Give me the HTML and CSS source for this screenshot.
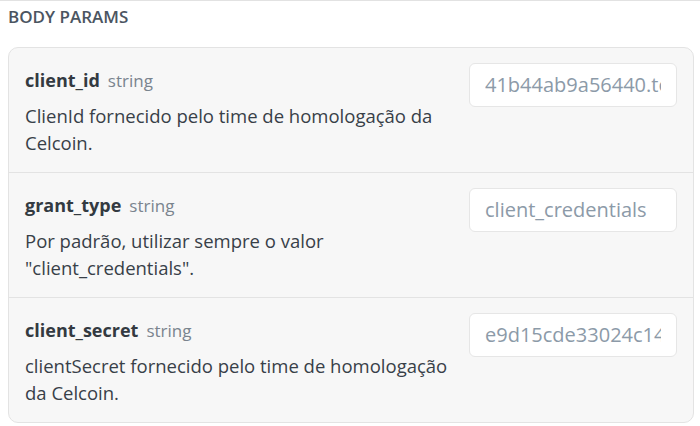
FILE: index.html
```html
<!DOCTYPE html>
<html lang="pt">
<head>
<meta charset="utf-8">
<link rel="stylesheet" href="styles.css">
</head>
<body>
<div class="page">
  <div class="section-title">BODY PARAMS</div>
  <div class="card">
    <div class="row">
      <div class="info">
        <div class="head"><span class="name">client_id</span><span class="type">string</span></div>
        <div class="desc">ClienId fornecido pelo time de homologação da Celcoin.</div>
      </div>
      <div class="field"><span class="value">41b44ab9a56440.teste.celcoinapi.v5</span></div>
    </div>
    <div class="row">
      <div class="info">
        <div class="head"><span class="name">grant_type</span><span class="type">string</span></div>
        <div class="desc">Por padrão, utilizar sempre o valor "client_credentials".</div>
      </div>
      <div class="field"><span class="value">client_credentials</span></div>
    </div>
    <div class="row">
      <div class="info">
        <div class="head"><span class="name">client_secret</span><span class="type">string</span></div>
        <div class="desc">clientSecret fornecido pelo time de homologação da Celcoin.</div>
      </div>
      <div class="field"><span class="value">e9d15cde33024c1494de7480e69b7a18c09d7cd25a8446839b3be82a56a044a3</span></div>
    </div>
  </div>
</div>
</body>
</html>
```
FILE: styles.css
```css
html, body {
  margin: 0;
  padding: 0;
  background: #ffffff;
}
body {
  font-family: "Open Sans", "Noto Sans", sans-serif;
  color: #384048;
}
.page {
  border-top: 1px solid #e2e2e2;
  padding: 0 6px 0 8px;
}
.section-title {
  font-size: 17px;
  font-weight: 600;
  color: #4b5561;
  line-height: 20px;
  padding-top: 6px;
  height: 46px;
  box-sizing: border-box;
}
.card {
  background: #f7f7f7;
  border: 1px solid #e3e3e3;
  border-radius: 10px;
}
.row {
  display: flex;
  gap: 16px;
  padding: 15px 16px 16px 16px;
  border-top: 1px solid #e3e3e3;
}
.row:first-child {
  border-top: none;
}
.info {
  flex: 1;
  min-width: 0;
  padding-top: 4px;
}
.head {
  font-size: 18px;
  line-height: 27px;
  margin-bottom: 8px;
}
.name {
  font-weight: 700;
  color: #333a41;
}
.type {
  font-size: 17px;
  color: #7a848e;
  margin-left: 8px;
}
.desc {
  font-size: 18.5px;
  line-height: 27px;
}
.field {
  flex: 0 0 auto;
  width: 208px;
  height: 44px;
  box-sizing: border-box;
  background: #ffffff;
  border: 1px solid #e6e6e6;
  border-radius: 6px;
  padding: 0 15px;
  font-size: 20px;
  line-height: 42px;
  color: #8c9aa8;
}
.value {
  display: block;
  white-space: nowrap;
  overflow: hidden;
}
```
